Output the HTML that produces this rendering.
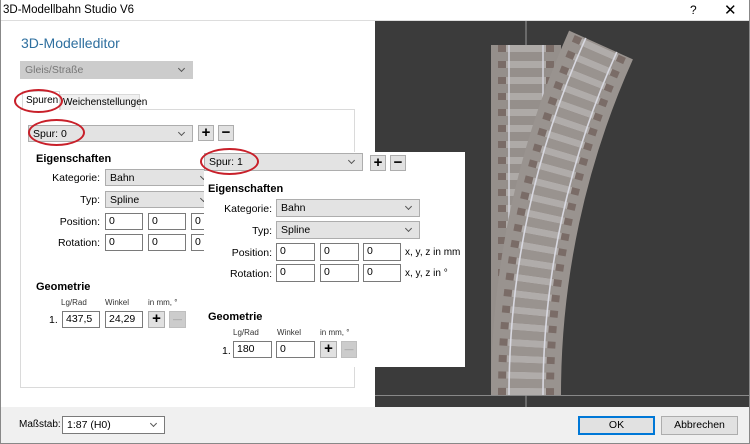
<!DOCTYPE html>
<html><head><meta charset="utf-8"><style>
*{box-sizing:border-box;margin:0;padding:0}
body{width:750px;height:444px;overflow:hidden;background:#fff;font-family:"Liberation Sans",sans-serif;font-size:11px;color:#000;position:relative}
.a{position:absolute}
.cb{position:absolute;background:#e3e3e3;border:1px solid #adadad;padding:2px 4px;font-size:10.5px;line-height:13px}
.cb:after{content:"";position:absolute;right:8px;top:4px;width:4px;height:4px;border-right:1px solid #555;border-bottom:1px solid #555;transform:rotate(45deg)}
.in{position:absolute;background:#fff;border:1px solid #7a7a7a;padding:1px 3px;font-size:10.5px;line-height:13px}
.bt{position:absolute;background:#e1e1e1;border:1px solid #adadad;font-size:15px;font-weight:bold;text-align:center;line-height:14px}
.bd{position:absolute;background:#ccc;border:1px solid #bfbfbf;color:#999;font-size:9px;text-align:center;line-height:14px}
.lb{position:absolute;text-align:right;font-size:10.5px}
.h{position:absolute;font-weight:bold;font-size:11px}
.sm{position:absolute;font-size:8px;color:#333}
.ov{position:absolute;border:2px solid #c8202a;border-radius:50%}
</style></head><body>
<div class="a" style="left:0;top:0;width:750px;height:21px;background:#fff;border-bottom:1px solid #ddd"></div>
<div class="a" style="left:3px;top:4px;font-size:11.5px">3D-Modellbahn Studio V6</div>
<div class="a" style="left:690px;top:3px;font-size:12px">?</div>
<div class="a" style="left:724px;top:1px;font-size:15px">✕</div>

<svg class="a" style="left:375px;top:21px" width="375" height="386" viewBox="375 21 375 386">
<rect x="375" y="21" width="375" height="386" fill="#3b3b3b"/>
<line x1="526" y1="21" x2="526" y2="45" stroke="#999"/>
<line x1="375" y1="395.5" x2="750" y2="395.5" stroke="#888"/>
<line x1="526" y1="395" x2="526" y2="407" stroke="#999"/>
<rect x="491" y="45" width="70" height="350" fill="#958f8b"/>
<line x1="526" y1="45" x2="526" y2="395" stroke="#7a6c67" stroke-width="56" stroke-dasharray="7 9"/>
<line x1="526" y1="45" x2="526" y2="395" stroke="#aeaaa7" stroke-width="40" stroke-dasharray="7 9"/>
<line x1="509" y1="45" x2="509" y2="395" stroke="#d0d0d8" stroke-width="1.6"/>
<line x1="543" y1="45" x2="543" y2="395" stroke="#d0d0d8" stroke-width="1.6"/>
<path d="M526 395 A851 851 0 0 1 601 45" fill="none" stroke="#99938f" stroke-width="70"/>
<path d="M526 395 A851 851 0 0 1 601 45" fill="none" stroke="#7a6c67" stroke-width="56" stroke-dasharray="7 9"/>
<path d="M526 395 A851 851 0 0 1 601 45" fill="none" stroke="#b0acaa" stroke-width="40" stroke-dasharray="7 9"/>
<path d="M509 395 A868 868 0 0 1 585.8 37.9" fill="none" stroke="#d8d8e0" stroke-width="1.6"/>
<path d="M543 395 A834 834 0 0 1 616.8 51.9" fill="none" stroke="#d8d8e0" stroke-width="1.6"/>
</svg>

<div class="a" style="left:0;top:407px;width:750px;height:37px;background:#f0f0f0"></div>

<div class="a" style="left:21px;top:35px;font-size:14px;color:#2e6f9f">3D-Modelleditor</div>
<div class="cb" style="left:20px;top:61px;width:173px;height:18px;background:#ccc;border-color:#ccc;color:#777">Gleis/Straße</div>

<div class="a" style="left:20px;top:109px;width:335px;height:279px;border:1px solid #dadada;background:#fff"></div>
<div class="a" style="left:60px;top:94px;width:80px;height:16px;border:1px solid #dadada;border-bottom:none;background:#f0f0f0;font-size:10px;padding:2px 2px;white-space:nowrap">Weichenstellungen</div>
<div class="a" style="left:22px;top:91px;width:38px;height:19px;border:1px solid #dadada;border-bottom:none;background:#fff;font-size:10px;padding:3px 3px;white-space:nowrap">Spuren</div>

<div class="cb" style="left:28px;top:125px;width:165px;height:17px">Spur: 0</div>
<div class="bt" style="left:198px;top:125px;width:16px;height:16px">+</div>
<div class="bt" style="left:218px;top:125px;width:16px;height:16px">−</div>
<div class="h" style="left:36px;top:153px">Eigenschaften</div>
<div class="lb" style="left:40px;top:172px;width:60px">Kategorie:</div>
<div class="cb" style="left:105px;top:169px;width:110px;height:17px">Bahn</div>
<div class="lb" style="left:40px;top:194px;width:60px">Typ:</div>
<div class="cb" style="left:105px;top:191px;width:110px;height:17px">Spline</div>
<div class="lb" style="left:40px;top:216px;width:60px">Position:</div>
<div class="in" style="left:105px;top:213px;width:38px;height:17px">0</div>
<div class="in" style="left:148px;top:213px;width:38px;height:17px">0</div>
<div class="in" style="left:191px;top:213px;width:38px;height:17px">0</div>
<div class="lb" style="left:40px;top:237px;width:60px">Rotation:</div>
<div class="in" style="left:105px;top:234px;width:38px;height:17px">0</div>
<div class="in" style="left:148px;top:234px;width:38px;height:17px">0</div>
<div class="in" style="left:191px;top:234px;width:38px;height:17px">0</div>
<div class="h" style="left:36px;top:281px">Geometrie</div>
<div class="sm" style="left:61px;top:298px">Lg/Rad</div>
<div class="sm" style="left:105px;top:298px">Winkel</div>
<div class="sm" style="left:148px;top:298px">in mm, °</div>
<div class="a" style="left:49px;top:314px;font-size:10.5px">1.</div>
<div class="in" style="left:62px;top:311px;width:38px;height:17px">437,5</div>
<div class="in" style="left:105px;top:311px;width:38px;height:17px">24,29</div>
<div class="bt" style="left:148px;top:311px;width:17px;height:17px">+</div>
<div class="bd" style="left:169px;top:311px;width:17px;height:17px">—</div>

<div class="a" style="left:204px;top:152px;width:261px;height:215px;background:#fff"></div>
<div class="cb" style="left:204px;top:153px;width:159px;height:18px">Spur: 1</div>
<div class="bt" style="left:370px;top:155px;width:16px;height:16px">+</div>
<div class="bt" style="left:390px;top:155px;width:16px;height:16px">−</div>
<div class="h" style="left:208px;top:183px">Eigenschaften</div>
<div class="lb" style="left:210px;top:203px;width:62px">Kategorie:</div>
<div class="cb" style="left:276px;top:199px;width:144px;height:18px">Bahn</div>
<div class="lb" style="left:210px;top:225px;width:62px">Typ:</div>
<div class="cb" style="left:276px;top:221px;width:144px;height:18px">Spline</div>
<div class="lb" style="left:210px;top:247px;width:62px">Position:</div>
<div class="in" style="left:276px;top:243px;width:39px;height:18px">0</div>
<div class="in" style="left:320px;top:243px;width:39px;height:18px">0</div>
<div class="in" style="left:363px;top:243px;width:38px;height:18px">0</div>
<div class="a" style="left:405px;top:247px;font-size:10px">x, y, z in mm</div>
<div class="lb" style="left:210px;top:268px;width:62px">Rotation:</div>
<div class="in" style="left:276px;top:264px;width:39px;height:18px">0</div>
<div class="in" style="left:320px;top:264px;width:39px;height:18px">0</div>
<div class="in" style="left:363px;top:264px;width:38px;height:18px">0</div>
<div class="a" style="left:405px;top:268px;font-size:10px">x, y, z in °</div>
<div class="h" style="left:208px;top:311px">Geometrie</div>
<div class="sm" style="left:233px;top:328px">Lg/Rad</div>
<div class="sm" style="left:277px;top:328px">Winkel</div>
<div class="sm" style="left:320px;top:328px">in mm, °</div>
<div class="a" style="left:222px;top:345px;font-size:10.5px">1.</div>
<div class="in" style="left:233px;top:341px;width:39px;height:17px">180</div>
<div class="in" style="left:276px;top:341px;width:39px;height:17px">0</div>
<div class="bt" style="left:320px;top:341px;width:17px;height:17px">+</div>
<div class="bd" style="left:341px;top:341px;width:16px;height:17px">—</div>

<div class="ov" style="left:14px;top:89px;width:49px;height:24px"></div>
<div class="ov" style="left:28px;top:119px;width:57px;height:27px"></div>
<div class="ov" style="left:200px;top:148px;width:59px;height:27px"></div>

<div class="a" style="left:19px;top:419px;font-size:10px">Maßstab:</div>
<div class="cb" style="left:62px;top:416px;width:103px;height:18px;background:#fff;border-color:#7a7a7a">1:87 (H0)</div>
<div class="a" style="left:578px;top:416px;width:77px;height:19px;background:#e1e1e1;border:2px solid #0078d7;text-align:center;line-height:15px;font-size:10.5px">OK</div>
<div class="a" style="left:661px;top:416px;width:77px;height:19px;background:#e1e1e1;border:1px solid #adadad;text-align:center;line-height:17px;font-size:10.5px">Abbrechen</div>
<div class="a" style="left:0;top:0;width:750px;height:444px;border:1px solid #888;border-top:none"></div>
</body></html>
